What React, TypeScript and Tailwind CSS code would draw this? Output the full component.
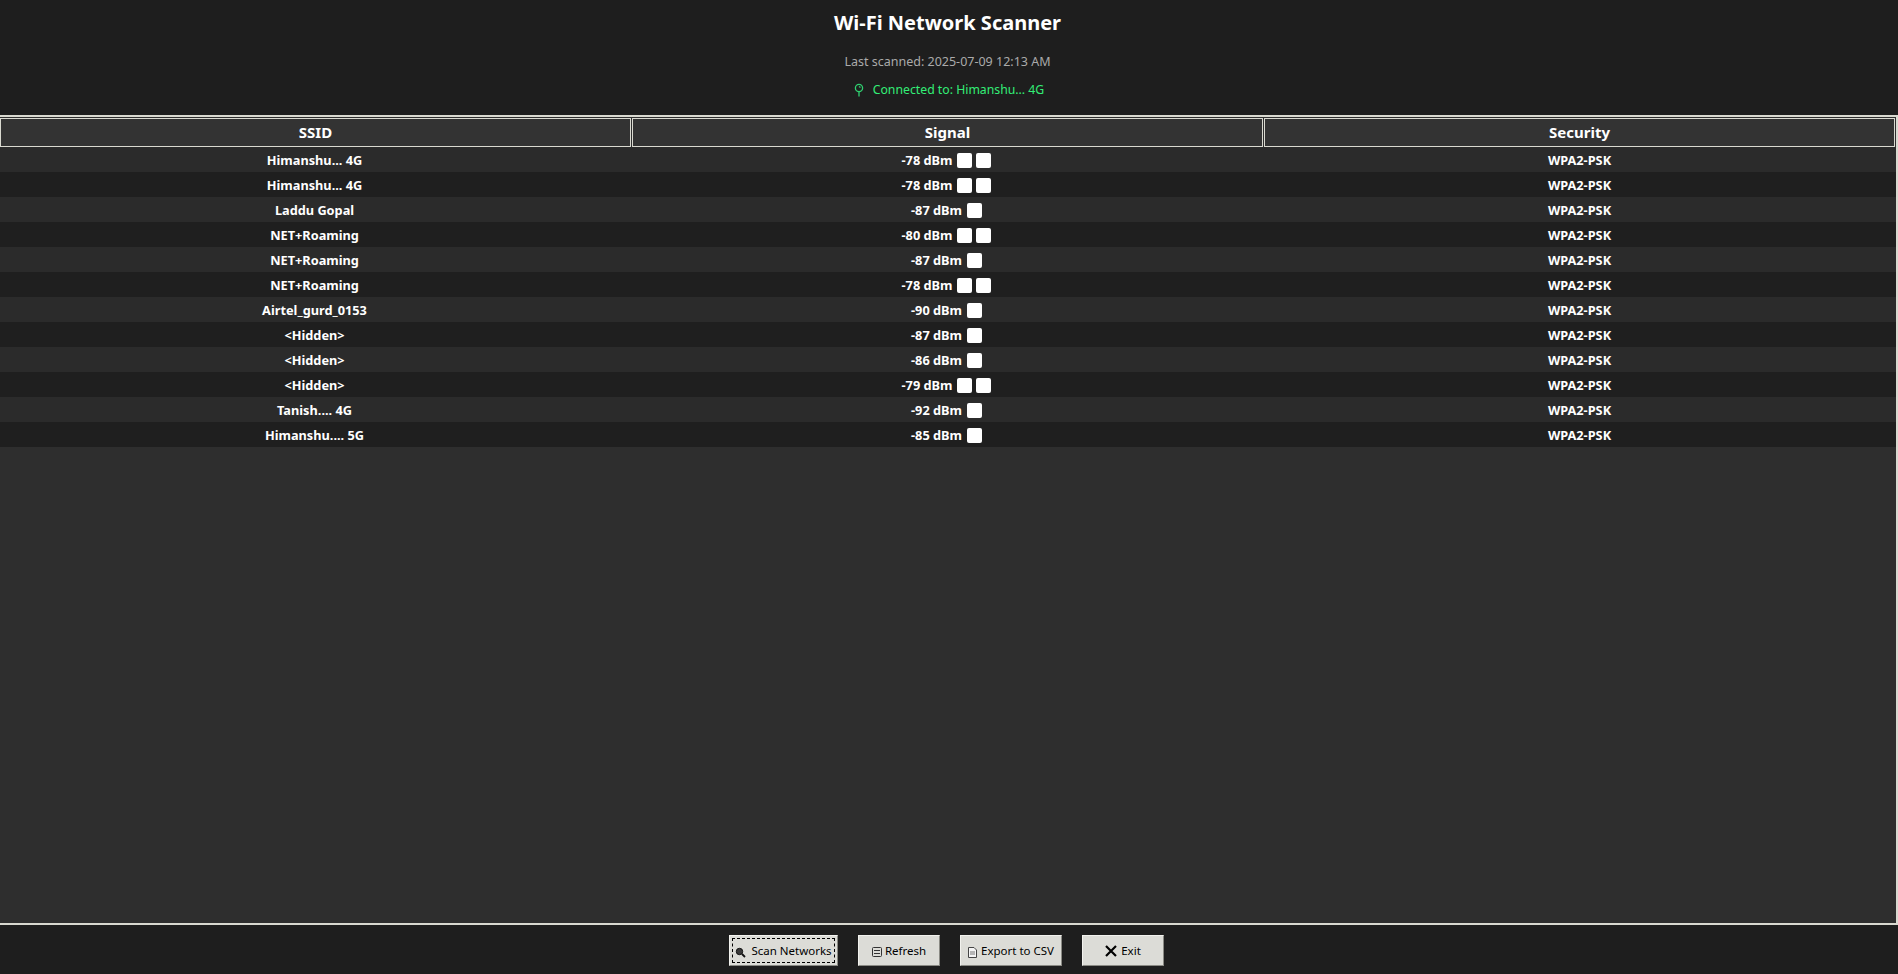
const FONT = "font-['Noto_Sans','Open_Sans',sans-serif]";

const networks = [
  { ssid: "Himanshu... 4G", dbm: -78, bars: 2 },
  { ssid: "Himanshu... 4G", dbm: -78, bars: 2 },
  { ssid: "Laddu Gopal", dbm: -87, bars: 1 },
  { ssid: "NET+Roaming", dbm: -80, bars: 2 },
  { ssid: "NET+Roaming", dbm: -87, bars: 1 },
  { ssid: "NET+Roaming", dbm: -78, bars: 2 },
  { ssid: "Airtel_gurd_0153", dbm: -90, bars: 1 },
  { ssid: "<Hidden>", dbm: -87, bars: 1 },
  { ssid: "<Hidden>", dbm: -86, bars: 1 },
  { ssid: "<Hidden>", dbm: -79, bars: 2 },
  { ssid: "Tanish.... 4G", dbm: -92, bars: 1 },
  { ssid: "Himanshu.... 5G", dbm: -85, bars: 1 },
];

function HeaderCell({ label }: { label: string }) {
  return (
    <div className="flex flex-1 items-center justify-center border border-[#d9d9d0] bg-[#333333] text-[15px] font-bold text-white">
      {label}
    </div>
  );
}

function Row({ ssid, dbm, bars, odd }: { ssid: string; dbm: number; bars: number; odd: boolean }) {
  return (
    <div className={"flex h-[25px] items-center pt-[2px] text-[12.75px] font-bold text-white " + (odd ? "bg-[#1f1f1f]" : "bg-[#2b2b2b]")}>
      <div className="flex-1 pr-[3px] text-center">{ssid}</div>
      <div className="flex flex-1 items-center justify-center gap-[4px] pr-[4px]">
        <span className="mr-[1px]">{dbm} dBm</span>
        {Array.from({ length: bars }).map((_, i) => (
          <span key={i} className="h-[15px] w-[15px] rounded-[2px] bg-white" />
        ))}
      </div>
      <div className="flex-1 pr-[2px] text-center">WPA2-PSK</div>
    </div>
  );
}

function Button({ children, focused, width }: { children: React.ReactNode; focused?: boolean; width: string }) {
  return (
    <button className={"flex h-[31px] items-center justify-center border border-t-[#f2f2ee] border-l-[#f2f2ee] border-r-[#8a8a84] border-b-[#8a8a84] bg-[#dcdcd7] p-[2px] text-[11.5px] text-black " + width}>
      <span className={"flex h-full w-full items-center justify-center gap-[3px] " + (focused ? "border border-dashed border-black" : "")}>
        {children}
      </span>
    </button>
  );
}

export default function App() {
  return (
    <div className={"flex h-[974px] w-full flex-col overflow-hidden bg-[#1e1e1e] " + FONT}>
      <div className="flex h-[115px] shrink-0 flex-col items-center">
        <h1 className="mt-[9px] pr-[3px] text-[20px] leading-[28px] font-bold text-white">Wi-Fi Network Scanner</h1>
        <div className="mt-[16px] pr-[3px] text-[12.5px] leading-[18px] text-[#aaaaaa]">Last scanned: 2025-07-09 12:13 AM</div>
        <div className="mt-[10px] flex items-center gap-[9px] text-[12.25px] leading-[18px] text-[#33ee77]">
          <svg width="10" height="14" viewBox="0 0 10 14" fill="none" stroke="#2fd070" strokeWidth="1.3">
            <circle cx="5" cy="5" r="3.6" />
            <path d="M5 8.5V13.5M5 3.5l1.5 1" />
          </svg>
          Connected to: Himanshu... 4G
        </div>
      </div>

      <div className="flex min-h-0 flex-1 flex-col border-y-2 border-r-2 border-[#d9d9d0] bg-[#2e2e2e]">
        <div className="mt-[1px] flex h-[29px] shrink-0 gap-[1px] pr-[1px]">
          <HeaderCell label="SSID" />
          <HeaderCell label="Signal" />
          <HeaderCell label="Security" />
        </div>
        <div>
          {networks.map((n, i) => (
            <Row key={i} ssid={n.ssid} dbm={n.dbm} bars={n.bars} odd={i % 2 === 1} />
          ))}
        </div>
      </div>

      <div className="flex h-[49px] shrink-0 items-start justify-center gap-[20px] pt-[10px] pr-[5px]">
        <Button focused width="w-[109px]">
          <svg width="11" height="11" viewBox="0 0 11 11" className="mt-[3px] mr-[2px]">
            <circle cx="4.5" cy="4.5" r="3.2" fill="#3a3a3a" stroke="#111" />
            <path d="M7 7l3 3" stroke="#111" strokeWidth="1.8" />
          </svg>
          Scan Networks
        </Button>
        <Button width="w-[82px]">
          <svg width="10" height="10" viewBox="0 0 10 10" fill="none" stroke="#333" className="mt-[3px]">
            <rect x="0.5" y="0.5" width="9" height="9" rx="1" />
            <path d="M2 3.5h6M2 6.5h6" />
          </svg>
          Refresh
        </Button>
        <Button width="w-[102px]">
          <svg width="9" height="11" viewBox="0 0 9 11" fill="#f4f4f4" stroke="#444" className="mt-[3px] mr-[1px]">
            <path d="M.5.5h5.5l2.5 2.5v7.5h-8z" />
            <path d="M2 5h5M2 7h5" fill="none" stroke="#777" />
          </svg>
          Export to CSV
        </Button>
        <Button width="w-[82px]">
          <svg width="12" height="12" viewBox="0 0 12 12" stroke="#000" strokeWidth="2.2" className="mr-[1px]">
            <path d="M1 1l10 10M11 1L1 11" />
          </svg>
          Exit
        </Button>
      </div>
    </div>
  );
}
